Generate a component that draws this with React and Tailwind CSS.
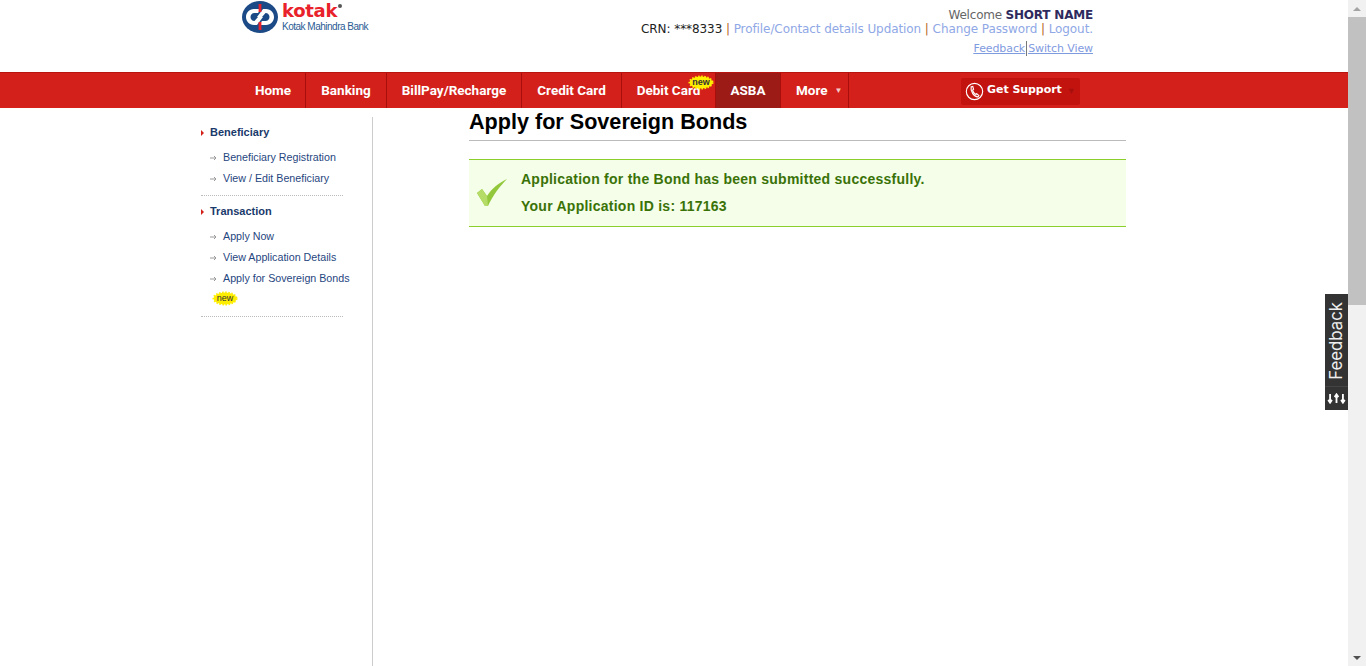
import React from 'react';

const navItems = [
  { label: 'Home', w: 'w-[65px]' },
  { label: 'Banking', w: 'w-[81px]' },
  { label: 'BillPay/Recharge', w: 'w-[135px]' },
  { label: 'Credit Card', w: 'w-[100px]' },
  { label: 'Debit Card', w: 'w-[94px]', badge: true },
  { label: 'ASBA', w: 'w-[65px]', active: true },
  { label: 'More', w: 'w-[68px]', caret: true },
];

const sideGroups = [
  {
    title: 'Beneficiary',
    links: ['Beneficiary Registration', 'View / Edit Beneficiary'],
  },
  {
    title: 'Transaction',
    links: ['Apply Now', 'View Application Details', 'Apply for Sovereign Bonds'],
    isNew: true,
  },
];

// Yellow starburst behind the "new" tag
const NewBadge = ({ className }) => (
  <span className={`flex h-[15px] w-[26px] items-center justify-center ${className}`}>
    <svg viewBox="0 0 26 15" className="absolute inset-0 h-full w-full">
      <ellipse cx="13" cy="7.5" rx="11.5" ry="6" fill="#ffee00" stroke="#ffee00" strokeWidth="2" strokeDasharray="1.5 1.5" />
    </svg>
    <span className="relative text-[9px] leading-none text-[#333] font-['Liberation_Sans',sans-serif]">new</span>
  </span>
);

const Logo = () => (
  <div className="ml-[1px] flex items-start pt-[1px]">
    <svg viewBox="0 0 36 32" className="h-[32px] w-[36px] shrink-0">
      <ellipse cx="18" cy="16" rx="18" ry="16" fill="#1b4a86" />
      <path d="M19 8 L12 8 C7 8 4 12 4 16 C4 20 7 24 12 24 L15 24 L21 16 L16 16 L12.5 20 C10 20 8.5 18 8.5 16 C8.5 14 10 12 12.5 12 L16 12 Z" fill="#fff" />
      <path d="M17 24 L24 24 C29 24 32 20 32 16 C32 12 29 8 24 8 L21 8 L15 16 L20 16 L23.5 12 C26 12 27.5 14 27.5 16 C27.5 18 26 20 23.5 20 L20 20 Z" fill="#fff" />
      <rect x="16.6" y="3" width="2.8" height="8" fill="#e8212a" />
      <rect x="16.6" y="21" width="2.8" height="8" fill="#e8212a" />
    </svg>
    <div className="ml-[4px] flex flex-col">
      <div className="flex h-[21px] items-start">
        <span className="text-[18px] leading-[20px] font-bold tracking-[-0.3px] text-[#e8212a] font-['DejaVu_Sans',sans-serif]">kotak</span>
        <span className="ml-[1px] mt-[3px] h-[4px] w-[4px] rounded-full bg-[#555]" />
      </div>
      <span className="text-[10px] leading-[9px] tracking-[-0.5px] whitespace-nowrap text-[#2a5b94] font-['Liberation_Sans',sans-serif]">Kotak Mahindra Bank</span>
    </div>
  </div>
);

const Header = () => (
  <div className="flex h-[72px] items-start justify-between pl-[241px] pr-[255px] font-['DejaVu_Sans',sans-serif]">
    <Logo />
    <div className="flex flex-col items-end pt-[8px] text-[12px] leading-[15px]">
      <div className="tracking-[-0.2px] text-[#666]">
        Welcome <b className="text-[#2e2a5e]">SHORT NAME</b>
      </div>
      <div className="-mt-[1px] tracking-[-0.08px] text-[#222]">
        CRN: ***8333 <span className="text-[#b5651d]">|</span>{' '}
        <a className="text-[#8fa8e6]">Profile/Contact details Updation</a> <span className="text-[#b5651d]">|</span>{' '}
        <a className="text-[#8fa8e6]">Change Password</a> <span className="text-[#b5651d]">|</span>{' '}
        <a className="text-[#8fa8e6]">Logout.</a>
      </div>
      <div className="mt-[4px] flex text-[11px] tracking-[-0.1px] text-[#7f9be0] underline">
        <a>Feedback</a>
        <span className="mx-[1px] w-[1px] bg-[#777]" />
        <a>Switch View</a>
      </div>
    </div>
  </div>
);

const NavBar = () => (
  <div className="flex h-[36px] bg-[#d4201a] pl-[241px] border-t border-[#b81410] font-['Roboto',sans-serif]">
    {navItems.map((item) => (
      <div
        key={item.label}
        className={`relative flex items-center border-r border-[#a80f0c] text-[13.5px] font-bold text-white ${item.w} ${item.caret ? 'pl-[15px]' : 'justify-center'} ${item.active ? 'bg-[#9c1b17]' : ''}`}
      >
        {item.label}
        {item.caret && <span className="ml-[7px] text-[8px] text-[#f3c9c7]">▼</span>}
        {item.badge && <NewBadge className="absolute right-[1px] top-[2px]" />}
      </div>
    ))}
    <div className="ml-[112px] mt-[5px] flex h-[27px] w-[119px] items-center rounded-[2px] bg-[#c3130f] pl-[4px]">
      <svg viewBox="0 0 20 20" className="h-[19px] w-[19px] shrink-0" fill="none" stroke="#fff" strokeWidth="1.2">
        <circle cx="10" cy="10" r="8.6" />
        <path d="M6.5 5 L8.2 4.6 L9 7.6 L8 8.6 C8.4 10.4 9.6 12 11 13 L12.3 12.2 L14.6 14.2 L13.6 15.6 C9.6 15.8 5.4 10 6.5 5 Z" />
      </svg>
      <span className="ml-[3px] -mt-[3px] whitespace-nowrap text-[11px] font-bold tracking-[-0.05px] text-white font-['DejaVu_Sans',sans-serif]">Get Support</span>
      <span className="ml-[5px] text-[9px] text-[#a80f0c]">▼</span>
    </div>
  </div>
);

const Sidebar = () => (
  <div className="ml-[200px] mt-[9px] w-[173px] border-r border-[#ccc] pt-[8px] font-['Liberation_Sans',sans-serif]">
    {sideGroups.map((group) => (
      <div key={group.title} className="mb-[8px] ml-[1px] w-[142px] border-b border-dotted border-[#bbb] pb-[6px]">
        <div className="flex h-[15px] items-center text-[11px] font-bold text-[#1a3a6b]">
          <span className="mr-[6px] h-0 w-0 border-y-[3px] border-l-[3px] border-y-transparent border-l-[#d4201a]" />
          {group.title}
        </div>
        <div className="mt-[7px] w-[172px]">
          {group.links.map((link) => (
            <div key={link} className="flex h-[21px] items-center text-[10.7px] whitespace-nowrap text-[#1f4680]">
              <svg viewBox="0 0 7 6" className="ml-[9px] mr-[6px] h-[6px] w-[7px] shrink-0" fill="none" stroke="#999" strokeWidth="1">
                <path d="M0 3 H6 M4 1 L6 3 L4 5" />
              </svg>
              {link}
            </div>
          ))}
          {group.isNew && (
            <div className="relative ml-[11px] mt-[2px] h-[19px]">
              <NewBadge className="relative" />
            </div>
          )}
        </div>
      </div>
    ))}
  </div>
);

const SuccessBox = () => (
  <div className="mt-[18px] flex h-[68px] items-center border-y border-[#8ccf2c] bg-[#f4fee8]">
    <svg viewBox="0 0 32 30" className="ml-[7px] h-[30px] w-[32px] shrink-0">
      <path d="M1 15 L6 11 L11 18 C16 10 23 5 31 1 C24 8 17 17 12 28 L9 28 Z" fill="#93c83c" />
      <path d="M1 15 L6 11 L11 18 L12 28 L9 28 Z" fill="#b4dc66" />
    </svg>
    <div className="ml-[13px] text-[14px] font-bold tracking-[0.25px] text-[#3a7208]">
      <div className="mb-[10px] leading-[17px]">Application for the Bond has been submitted successfully.</div>
      <div className="leading-[17px]">Your Application ID is: 117163</div>
    </div>
  </div>
);

const Scrollbar = () => (
  <div className="flex h-full w-[18px] shrink-0 flex-col items-center bg-[#f1f1f1]">
    <div className="flex h-[17px] w-full items-center justify-center">
      <span className="h-0 w-0 border-x-[4px] border-b-[4px] border-x-transparent border-b-[#a3a3a3]" />
    </div>
    <div className="h-[288px] w-full bg-[#c1c1c1]" />
    <div className="flex-1" />
    <div className="flex h-[17px] w-full items-center justify-center">
      <span className="h-0 w-0 border-x-[4px] border-t-[4px] border-x-transparent border-t-[#505050]" />
    </div>
  </div>
);

const FeedbackTab = () => (
  <div className="absolute right-[18px] top-[294px] flex h-[116px] w-[23px] flex-col items-center bg-[#333] text-white font-['Inter',sans-serif]">
    <div className="flex h-[93px] items-center justify-center border-b border-[#444] pt-[2px]">
      <span className="rotate-180 text-[16.8px] leading-[23px] [writing-mode:vertical-rl] text-[#eee]">Feedback</span>
    </div>
    <svg viewBox="0 0 20 12" className="mt-[6px] h-[11px] w-[19px]" fill="none" stroke="#fff" strokeWidth="2">
      <path d="M3 1 V10 M1 7.5 L3 10.5 L5 7.5" />
      <path d="M10 11 V2 M8 4.5 L10 1.5 L12 4.5" />
      <path d="M17 1 V10 M15 7.5 L17 10.5 L19 7.5" />
    </svg>
  </div>
);

const App = () => (
  <div className="relative flex h-[666px] w-[1366px] overflow-hidden bg-white">
    <div className="flex w-[1348px] flex-col">
      <Header />
      <NavBar />
      <div className="flex flex-1">
        <Sidebar />
        <div className="ml-[96px] w-[657px] font-['Liberation_Sans',sans-serif]">
          <h1 className="flex h-[33px] items-center border-b border-[#bbb] pb-[6px] pt-[2px] text-[21.6px] font-bold text-black">
            Apply for Sovereign Bonds
          </h1>
          <SuccessBox />
        </div>
      </div>
    </div>
    <Scrollbar />
    <FeedbackTab />
  </div>
);

export default App;
